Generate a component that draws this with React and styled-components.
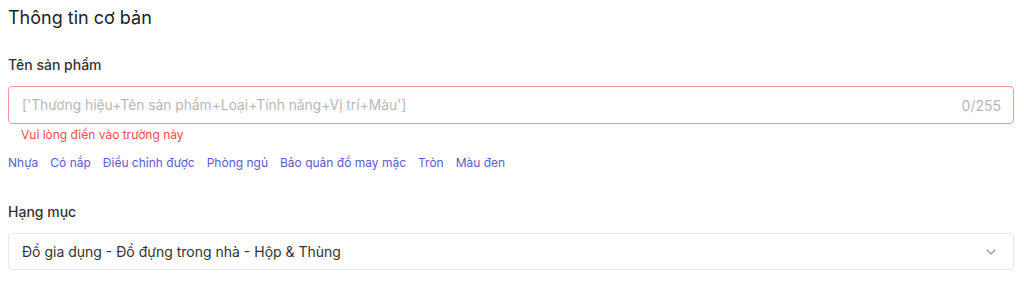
import styled, { createGlobalStyle } from "styled-components";

const GlobalStyle = createGlobalStyle`
    body {
        margin: 0;
        background: #ffffff;
        font-family: "Inter", "Liberation Sans", sans-serif;
        color: #222;
    }
`;

const tags = ["Nhựa", "Có nắp", "Điều chỉnh được", "Phòng ngủ", "Bảo quản đồ may mặc", "Tròn", "Màu đen"];

export default function App() {
    return (
        <>
            <GlobalStyle />
            <SCPage>
                <SCTitle>Thông tin cơ bản</SCTitle>

                <SCLabel>Tên sản phẩm</SCLabel>
                <SCInputBox $error>
                    <SCPlaceholder>['Thương hiệu+Tên sản phẩm+Loại+Tính năng+Vị trí+Màu']</SCPlaceholder>
                    <SCCounter>0/255</SCCounter>
                </SCInputBox>
                <SCError>Vui lòng điền vào trường này</SCError>
                <SCTags>
                    {tags.map(t => <SCTag key={t}>{t}</SCTag>)}
                </SCTags>

                <SCLabel $top={29}>Hạng mục</SCLabel>
                <SCInputBox>
                    <SCValue>Đồ gia dụng - Đồ đựng trong nhà - Hộp &amp; Thùng</SCValue>
                    <svg width="16" height="16" viewBox="0 0 24 24" fill="none" stroke="#9a9a9a" strokeWidth="1.8" strokeLinecap="round" strokeLinejoin="round">
                        <path d="M6 9l6 6 6-6" />
                    </svg>
                </SCInputBox>
            </SCPage>
        </>
    );
}

const SCPage = styled.div`
    padding: 6px 10px 0 8px;
    display: flex;
    flex-direction: column;
`;

const SCTitle = styled.h1`
    margin: 0;
    font-size: 18px;
    line-height: 24px;
    font-weight: 400;
    color: #222;
`;

const SCLabel = styled.div`
    margin-top: ${p => p.$top ?? 25}px;
    font-size: 14px;
    line-height: 20px;
    font-weight: 500;
    color: #333;
`;

const SCInputBox = styled.div`
    margin-top: 11px;
    height: ${p => p.$error ? 38 : 37}px;
    box-sizing: border-box;
    border: 1px solid ${p => p.$error ? "#ee9a9c" : "#e8e8e8"};
    border-radius: 4px;
    padding: 0 ${p => p.$error ? 12 : 14}px 0 13px;
    display: flex;
    align-items: center;
    justify-content: space-between;
    font-size: 14px;
`;

const SCPlaceholder = styled.span`
    color: #b8b8b8;
    font-size: 13.8px;
`;

const SCCounter = styled.span`
    color: #b8b8b8;
`;

const SCValue = styled.span`
    color: #333;
`;

const SCError = styled.div`
    margin-top: 2px;
    padding-left: 13px;
    font-size: 12px;
    line-height: 18px;
    color: #ee4d4d;
`;

const SCTags = styled.div`
    margin-top: 9px;
    display: flex;
    gap: 12px;
    font-size: 12px;
    line-height: 20px;
`;

const SCTag = styled.span`
    color: #5b5bd6;
    cursor: pointer;
`;
